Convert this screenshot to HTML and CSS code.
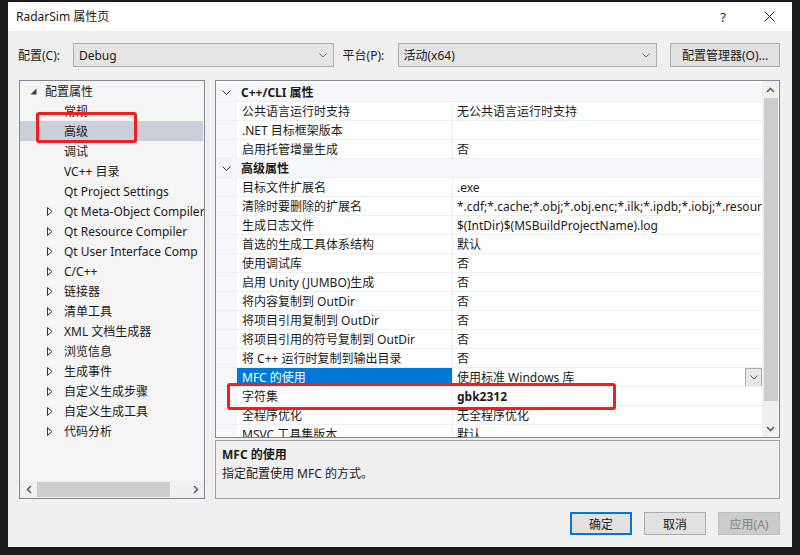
FILE: index.html
```html
<!DOCTYPE html>
<html lang="zh-CN">
<head>
    <meta charset="UTF-8">
    <title>RadarSim 属性页</title>
    <link rel="stylesheet" href="styles.css">
</head>
<body>
    <div class="dialog">
        <div class="titlebar">
            <span class="title">RadarSim 属性页</span>
            <div class="title-buttons">
                <span class="help-btn">?</span>
                <span class="close-btn">
                    <svg width="11" height="11" viewBox="0 0 11 11"><path d="M0.5 0.5 L10.5 10.5 M10.5 0.5 L0.5 10.5" stroke="#111" stroke-width="1"/></svg>
                </span>
            </div>
        </div>

        <div class="dialog-body">
            <div class="config-row">
                <label class="config-label">配置(C):</label>
                <div class="combo combo-config">
                    <span>Debug</span>
                    <svg width="8" height="5" viewBox="0 0 8 5"><path d="M0.5 0.5 L4 4 L7.5 0.5" stroke="#707070" fill="none"/></svg>
                </div>
                <label class="platform-label">平台(P):</label>
                <div class="combo combo-platform">
                    <span>活动(x64)</span>
                    <svg width="8" height="5" viewBox="0 0 8 5"><path d="M0.5 0.5 L4 4 L7.5 0.5" stroke="#707070" fill="none"/></svg>
                </div>
                <button class="btn btn-manager">配置管理器(O)...</button>
            </div>

            <div class="main-area">
                <div class="tree-panel">
                    <div class="tree-list">
                        <div class="tree-row root">
                            <span class="tree-toggle">
                                <svg width="7" height="7" viewBox="0 0 7 7"><path d="M6.5 0.5 V6.5 H0.5 Z" fill="#404040"/></svg>
                            </span>
                            <span>配置属性</span>
                        </div>
                        <div class="tree-row child"><span class="tree-toggle"></span><span>常规</span></div>
                        <div class="tree-row child selected"><span class="tree-toggle"></span><span>高级</span></div>
                        <div class="tree-row child"><span class="tree-toggle"></span><span>调试</span></div>
                        <div class="tree-row child"><span class="tree-toggle"></span><span>VC++ 目录</span></div>
                        <div class="tree-row child"><span class="tree-toggle"></span><span>Qt Project Settings</span></div>
                        <div class="tree-row child"><span class="tree-toggle"><svg class="collapsed" width="6" height="9" viewBox="0 0 6 9"><path d="M0.5 0.5 L5 4.5 L0.5 8.5 Z" fill="none" stroke="#333"/></svg></span><span>Qt Meta-Object Compiler</span></div>
                        <div class="tree-row child"><span class="tree-toggle"><svg class="collapsed" width="6" height="9" viewBox="0 0 6 9"><path d="M0.5 0.5 L5 4.5 L0.5 8.5 Z" fill="none" stroke="#333"/></svg></span><span>Qt Resource Compiler</span></div>
                        <div class="tree-row child"><span class="tree-toggle"><svg class="collapsed" width="6" height="9" viewBox="0 0 6 9"><path d="M0.5 0.5 L5 4.5 L0.5 8.5 Z" fill="none" stroke="#333"/></svg></span><span>Qt User Interface Comp</span></div>
                        <div class="tree-row child"><span class="tree-toggle"><svg class="collapsed" width="6" height="9" viewBox="0 0 6 9"><path d="M0.5 0.5 L5 4.5 L0.5 8.5 Z" fill="none" stroke="#333"/></svg></span><span>C/C++</span></div>
                        <div class="tree-row child"><span class="tree-toggle"><svg class="collapsed" width="6" height="9" viewBox="0 0 6 9"><path d="M0.5 0.5 L5 4.5 L0.5 8.5 Z" fill="none" stroke="#333"/></svg></span><span>链接器</span></div>
                        <div class="tree-row child"><span class="tree-toggle"><svg class="collapsed" width="6" height="9" viewBox="0 0 6 9"><path d="M0.5 0.5 L5 4.5 L0.5 8.5 Z" fill="none" stroke="#333"/></svg></span><span>清单工具</span></div>
                        <div class="tree-row child"><span class="tree-toggle"><svg class="collapsed" width="6" height="9" viewBox="0 0 6 9"><path d="M0.5 0.5 L5 4.5 L0.5 8.5 Z" fill="none" stroke="#333"/></svg></span><span>XML 文档生成器</span></div>
                        <div class="tree-row child"><span class="tree-toggle"><svg class="collapsed" width="6" height="9" viewBox="0 0 6 9"><path d="M0.5 0.5 L5 4.5 L0.5 8.5 Z" fill="none" stroke="#333"/></svg></span><span>浏览信息</span></div>
                        <div class="tree-row child"><span class="tree-toggle"><svg class="collapsed" width="6" height="9" viewBox="0 0 6 9"><path d="M0.5 0.5 L5 4.5 L0.5 8.5 Z" fill="none" stroke="#333"/></svg></span><span>生成事件</span></div>
                        <div class="tree-row child"><span class="tree-toggle"><svg class="collapsed" width="6" height="9" viewBox="0 0 6 9"><path d="M0.5 0.5 L5 4.5 L0.5 8.5 Z" fill="none" stroke="#333"/></svg></span><span>自定义生成步骤</span></div>
                        <div class="tree-row child"><span class="tree-toggle"><svg class="collapsed" width="6" height="9" viewBox="0 0 6 9"><path d="M0.5 0.5 L5 4.5 L0.5 8.5 Z" fill="none" stroke="#333"/></svg></span><span>自定义生成工具</span></div>
                        <div class="tree-row child"><span class="tree-toggle"><svg class="collapsed" width="6" height="9" viewBox="0 0 6 9"><path d="M0.5 0.5 L5 4.5 L0.5 8.5 Z" fill="none" stroke="#333"/></svg></span><span>代码分析</span></div>
                    </div>
                    <div class="hscroll">
                        <span class="scroll-arrow">
                            <svg width="6" height="9" viewBox="0 0 6 9"><path d="M5 1 L1.5 4.5 L5 8" stroke="#606060" stroke-width="1.6" fill="none"/></svg>
                        </span>
                        <div class="hscroll-track"><div class="hscroll-thumb"></div></div>
                        <span class="scroll-arrow">
                            <svg width="6" height="9" viewBox="0 0 6 9"><path d="M1 1 L4.5 4.5 L1 8" stroke="#606060" stroke-width="1.6" fill="none"/></svg>
                        </span>
                    </div>
                    <div class="mark mark-tree"></div>
                </div>

                <div class="right-area">
                    <div class="prop-grid">
                        <div class="grid-rows">
                            <div class="prop-row category">
                                <span class="gutter"><svg width="9" height="5" viewBox="0 0 9 5"><path d="M0.5 0.5 L4.5 4.5 L8.5 0.5" stroke="#333" fill="none"/></svg></span>
                                <span class="cat-name">C++/CLI 属性</span>
                            </div>
                            <div class="prop-row"><span class="gutter"></span><span class="prop-name">公共语言运行时支持</span><span class="prop-value">无公共语言运行时支持</span></div>
                            <div class="prop-row"><span class="gutter"></span><span class="prop-name">.NET 目标框架版本</span><span class="prop-value"></span></div>
                            <div class="prop-row"><span class="gutter"></span><span class="prop-name">启用托管增量生成</span><span class="prop-value">否</span></div>
                            <div class="prop-row category">
                                <span class="gutter"><svg width="9" height="5" viewBox="0 0 9 5"><path d="M0.5 0.5 L4.5 4.5 L8.5 0.5" stroke="#333" fill="none"/></svg></span>
                                <span class="cat-name">高级属性</span>
                            </div>
                            <div class="prop-row"><span class="gutter"></span><span class="prop-name">目标文件扩展名</span><span class="prop-value">.exe</span></div>
                            <div class="prop-row"><span class="gutter"></span><span class="prop-name">清除时要删除的扩展名</span><span class="prop-value">*.cdf;*.cache;*.obj;*.obj.enc;*.ilk;*.ipdb;*.iobj;*.resource</span></div>
                            <div class="prop-row"><span class="gutter"></span><span class="prop-name">生成日志文件</span><span class="prop-value">$(IntDir)$(MSBuildProjectName).log</span></div>
                            <div class="prop-row"><span class="gutter"></span><span class="prop-name">首选的生成工具体系结构</span><span class="prop-value">默认</span></div>
                            <div class="prop-row"><span class="gutter"></span><span class="prop-name">使用调试库</span><span class="prop-value">否</span></div>
                            <div class="prop-row"><span class="gutter"></span><span class="prop-name">启用 Unity (JUMBO)生成</span><span class="prop-value">否</span></div>
                            <div class="prop-row"><span class="gutter"></span><span class="prop-name">将内容复制到 OutDir</span><span class="prop-value">否</span></div>
                            <div class="prop-row"><span class="gutter"></span><span class="prop-name">将项目引用复制到 OutDir</span><span class="prop-value">否</span></div>
                            <div class="prop-row"><span class="gutter"></span><span class="prop-name">将项目引用的符号复制到 OutDir</span><span class="prop-value">否</span></div>
                            <div class="prop-row"><span class="gutter"></span><span class="prop-name">将 C++ 运行时复制到输出目录</span><span class="prop-value">否</span></div>
                            <div class="prop-row selected">
                                <span class="gutter"></span>
                                <span class="prop-name">MFC 的使用</span>
                                <span class="prop-value">
                                    <span>使用标准 Windows 库</span>
                                    <span class="value-drop"><svg width="8" height="5" viewBox="0 0 8 5"><path d="M0.5 0.5 L4 4 L7.5 0.5" stroke="#606060" fill="none"/></svg></span>
                                </span>
                            </div>
                            <div class="prop-row"><span class="gutter"></span><span class="prop-name">字符集</span><span class="prop-value bold">gbk2312</span></div>
                            <div class="prop-row"><span class="gutter"></span><span class="prop-name">全程序优化</span><span class="prop-value">无全程序优化</span></div>
                            <div class="prop-row"><span class="gutter"></span><span class="prop-name">MSVC 工具集版本</span><span class="prop-value">默认</span></div>
                        </div>
                        <div class="vscroll">
                            <span class="scroll-arrow">
                                <svg width="9" height="6" viewBox="0 0 9 6"><path d="M1 5 L4.5 1.5 L8 5" stroke="#606060" stroke-width="1.6" fill="none"/></svg>
                            </span>
                            <div class="vscroll-thumb"></div>
                            <div class="vscroll-space"></div>
                            <span class="scroll-arrow">
                                <svg width="9" height="6" viewBox="0 0 9 6"><path d="M1 1 L4.5 4.5 L8 1" stroke="#606060" stroke-width="1.6" fill="none"/></svg>
                            </span>
                        </div>
                        <div class="mark mark-grid"></div>
                    </div>

                    <div class="desc-panel">
                        <h4>MFC 的使用</h4>
                        <p>指定配置使用 MFC 的方式。</p>
                    </div>
                </div>
            </div>

            <div class="button-row">
                <button class="btn btn-ok">确定</button>
                <button class="btn">取消</button>
                <button class="btn btn-disabled">应用(A)</button>
            </div>
        </div>
    </div>
</body>
</html>
```

FILE: styles.css
```css
:root {
    --frame: #1c1c1c;
    --face: #f0f0f0;
    --border: #828790;
    --btn: #e1e1e1;
    --btn-border: #adadad;
    --accent: #0078d7;
    --text: #1a1a1a;
    --mark: #f21d1d;
}

body {
    margin: 0;
    padding: 2px 8px 0;
    background-color: var(--frame);
    font-family: "Noto Sans", "Noto Sans CJK SC", sans-serif;
    font-size: 12px;
    color: var(--text);
    overflow: hidden;
}

.dialog {
    width: 784px;
    height: 545px;
    display: flex;
    flex-direction: column;
    background-color: var(--face);
}

.titlebar {
    height: 29px;
    background: white;
    display: flex;
    align-items: center;
    justify-content: space-between;
    padding: 0 0 0 8px;
}

.title {
    margin-top: -2px;
}

.title-buttons {
    display: flex;
    align-items: center;
}

.help-btn {
    width: 46px;
    text-align: center;
    font-size: 13px;
}

.close-btn {
    width: 46px;
    display: flex;
    justify-content: center;
}

.dialog-body {
    flex: 1;
    padding: 12px 12px 0 11px;
    display: flex;
    flex-direction: column;
}

.config-row {
    display: flex;
    align-items: center;
    height: 24px;
}

.config-label {
    width: 55px;
    margin-left: -1px;
}

.platform-label {
    width: 55px;
    margin-left: 9px;
}

.combo {
    height: 22px;
    background-color: #e5e5e5;
    border: 1px solid var(--btn-border);
    display: flex;
    align-items: center;
    justify-content: space-between;
    padding: 0 6px 0 5px;
}

.combo-config {
    width: 248px;
}

.combo-platform {
    width: 247px;
}

.btn {
    font-family: inherit;
    font-size: 12px;
    color: var(--text);
    background-color: var(--btn);
    border: 1px solid var(--btn-border);
    height: 24px;
    padding: 0;
}

.btn-manager {
    width: 110px;
    margin-left: 13px;
}

.main-area {
    display: flex;
    margin-top: 13px;
    height: 419px;
}

.tree-panel {
    position: relative;
    width: 184px;
    flex-shrink: 0;
    border: 1px solid var(--border);
    background-color: #f5f5f5;
    display: flex;
    flex-direction: column;
}

.tree-list {
    flex: 1;
    overflow: hidden;
}

.tree-row {
    height: 20px;
    display: flex;
    align-items: center;
    white-space: nowrap;
}

.tree-row.root {
    padding-left: 8px;
}

.tree-row.child {
    padding-left: 27px;
}

.tree-row.selected {
    background-color: #cccedb;
    margin-right: 1px;
}

.tree-toggle {
    width: 17px;
    flex-shrink: 0;
    display: flex;
    align-items: center;
}

.tree-row.root .tree-toggle {
    padding-left: 2px;
    width: 15px;
}

.hscroll {
    height: 17px;
    display: flex;
    align-items: center;
    background-color: var(--face);
}

.scroll-arrow {
    width: 17px;
    height: 17px;
    display: flex;
    justify-content: center;
    align-items: center;
    flex-shrink: 0;
}

.hscroll-track {
    flex: 1;
    height: 15px;
}

.hscroll-thumb {
    width: 133px;
    height: 15px;
    background-color: #cdcdcd;
}

.mark {
    position: absolute;
    border: 3px solid var(--mark);
    border-radius: 3px;
}

.mark-tree {
    left: 16px;
    top: 31px;
    width: 95px;
    height: 25px;
}

.right-area {
    flex: 1;
    min-width: 0;
    margin-left: 10px;
    display: flex;
    flex-direction: column;
}

.prop-grid {
    position: relative;
    height: 356px;
    border: 1px solid var(--border);
    background: white;
    display: flex;
}

.grid-rows {
    flex: 1;
    min-width: 0;
    overflow: hidden;
    padding-top: 2px;
}

.prop-row {
    height: 18px;
    display: flex;
    align-items: center;
    border-bottom: 1px solid #eef0f4;
    white-space: nowrap;
}

.gutter {
    width: 21px;
    height: 100%;
    flex-shrink: 0;
    background-color: #f5f7fa;
    display: flex;
    align-items: center;
    padding-left: 6px;
    box-sizing: border-box;
}

.prop-row.category {
    background-color: #f5f7fa;
}

.cat-name {
    font-weight: bold;
    padding-left: 4px;
}

.prop-name {
    width: 215px;
    height: 100%;
    display: flex;
    align-items: center;
    padding-left: 5px;
    box-sizing: border-box;
    flex-shrink: 0;
    overflow: hidden;
}

.prop-value {
    flex: 1;
    min-width: 0;
    height: 100%;
    display: flex;
    align-items: center;
    justify-content: space-between;
    padding-left: 4px;
    border-left: 1px solid #eef0f4;
    overflow: hidden;
}

.prop-value.bold {
    font-weight: bold;
}

.prop-row.selected .prop-name {
    background-color: var(--accent);
    color: white;
}

.value-drop {
    width: 15px;
    height: 17px;
    border: 1px solid var(--btn-border);
    background-color: #e8e8e8;
    display: flex;
    justify-content: center;
    align-items: center;
    flex-shrink: 0;
}

.vscroll {
    width: 17px;
    flex-shrink: 0;
    background-color: var(--face);
    display: flex;
    flex-direction: column;
    align-items: center;
}

.vscroll-thumb {
    width: 14px;
    height: 303px;
    background-color: #cdcdcd;
}

.vscroll-space {
    flex: 1;
}

.mark-grid {
    left: 11px;
    top: 302px;
    width: 383px;
    height: 21px;
}

.desc-panel {
    margin-top: 2px;
    flex: 1;
    border: 1px solid #a0a0a0;
    padding: 4px 6px;
}

.desc-panel h4 {
    margin: 0;
    font-size: 12px;
    line-height: 19px;
}

.desc-panel p {
    margin: 0;
    line-height: 19px;
}

.button-row {
    display: flex;
    justify-content: flex-end;
    gap: 12px;
    margin-top: 13px;
}

.button-row .btn {
    width: 62px;
    height: 23px;
}

.btn-ok {
    border: 2px solid var(--accent) !important;
}

.btn-disabled {
    background-color: #cccccc;
    border-color: #bfbfbf;
    color: #838383;
}
```
